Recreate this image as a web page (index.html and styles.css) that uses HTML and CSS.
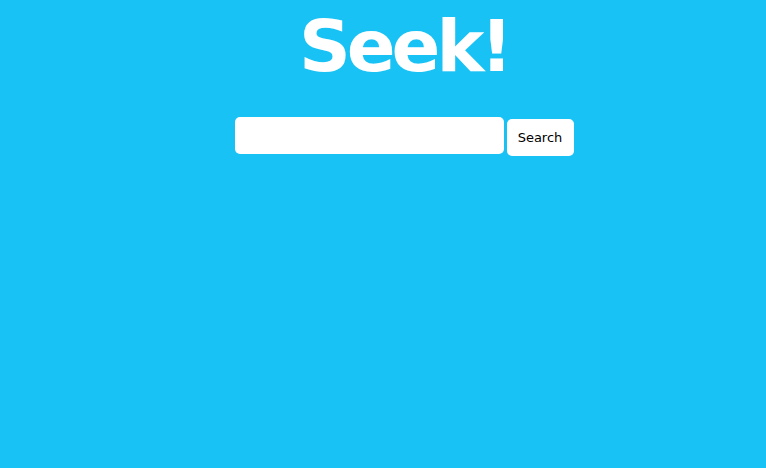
FILE: index.html
```html
<!DOCTYPE html>
<html>
<head>
<meta charset="utf-8">
<link rel="stylesheet" href="styles.css">
</head>
<body>
<div class="page">
  <h1 class="title">Seek!</h1>
  <form class="search">
    <input class="query" type="text">
    <button class="btn" type="button">Search</button>
  </form>
</div>
</body>
</html>
```
FILE: styles.css
```css
html, body {
  margin: 0;
  padding: 0;
  background: #18c2f4;
  height: 100%;
}
.page {
  display: flex;
  flex-direction: column;
  align-items: center;
  padding-left: 42px;
  font-family: "DejaVu Sans", sans-serif;
}
.title {
  margin: 0;
  padding-top: 4px;
  font-size: 72px;
  font-weight: bold;
  color: #fff;
  line-height: 84px;
  letter-spacing: -4px;
}
.search {
  display: flex;
  align-items: flex-start;
  gap: 3px;
  margin-top: 29px;
}
.query {
  width: 269px;
  height: 37px;
  box-sizing: border-box;
  border: none;
  border-radius: 5px;
  background: #fff;
  margin: 0;
}
.btn {
  margin-top: 2px;
  width: 67px;
  height: 37px;
  border: none;
  border-radius: 5px;
  background: #fff;
  font-family: "DejaVu Sans", sans-serif;
  font-size: 13px;
  color: #000;
  padding: 0;
}
```
